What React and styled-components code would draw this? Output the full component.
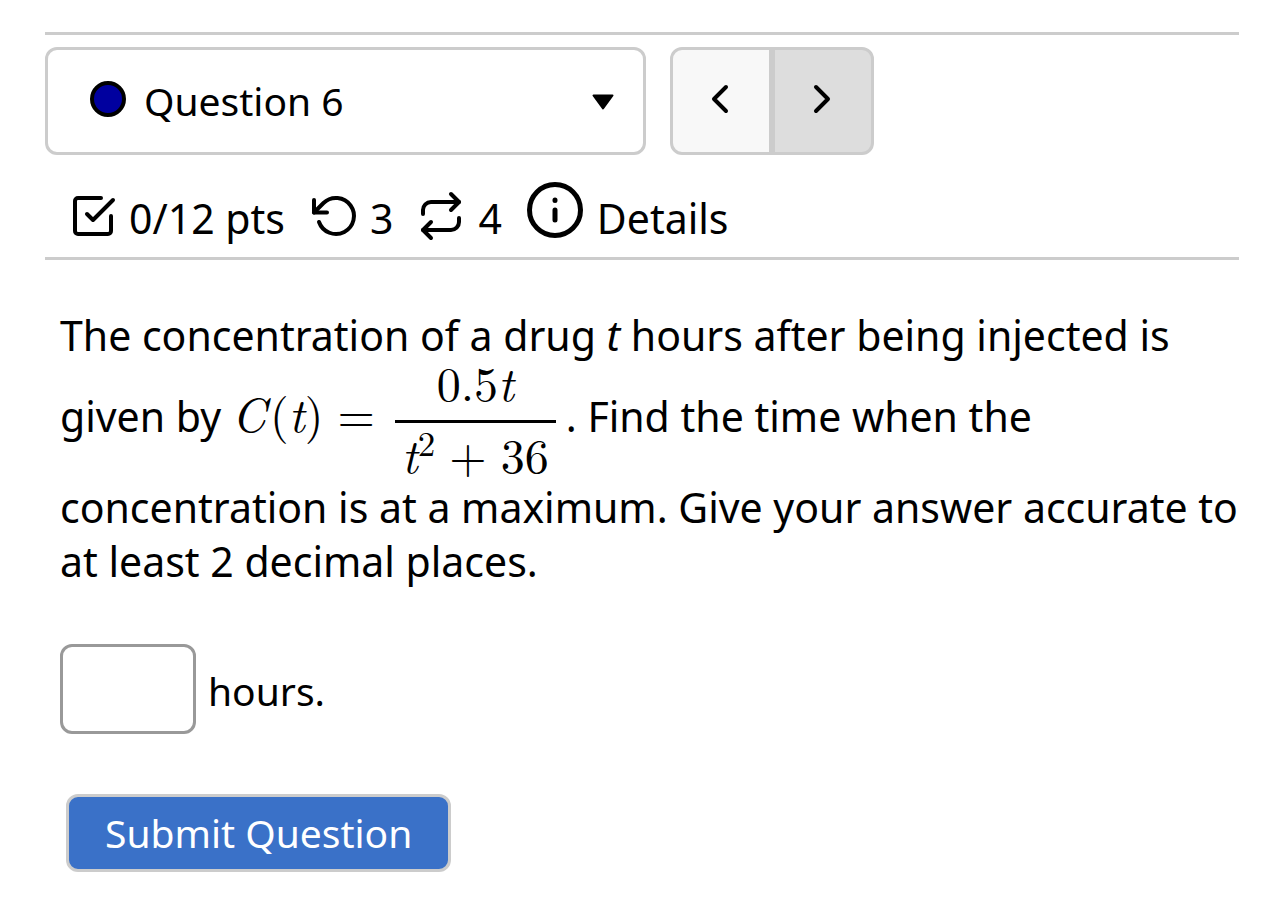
import React from "react";
import styled, { createGlobalStyle } from "styled-components";

const GlobalStyle = createGlobalStyle`
  *, *::before, *::after { box-sizing: border-box; }
  body {
    margin: 0;
    background: #fff;
    color: #000;
    font-family: "Trebuchet MS", "Noto Sans", sans-serif;
    font-size: 39px;
    line-height: 54px;
  }
  button, input, select { font: inherit; color: inherit; }
`;

const Page = styled.main`
  padding: 32px 45px;
`;

const Header = styled.header`
  border-top: 3px solid #ccc;
  border-bottom: 3px solid #ccc;
  padding-top: 12px;
`;

const Toolbar = styled.nav`
  display: flex;
  gap: 24px;
  height: 108px;
`;

const Picker = styled.label`
  position: relative;
  display: flex;
  flex: 0 1 601px;
`;

const PickerSelect = styled.select`
  appearance: none;
  width: 100%;
  padding: 0 80px 0 96px;
  border: 3px solid #ccc;
  border-radius: 12px;
  background: transparent;
`;

const StatusDot = styled.span`
  position: absolute;
  top: 34px;
  left: 45px;
  width: 36px;
  height: 36px;
  border: 4px solid #000;
  border-radius: 50%;
  background: #00009f;
  pointer-events: none;
`;

const Caret = styled.svg`
  position: absolute;
  top: 47px;
  right: 32px;
  pointer-events: none;
`;

const StepGroup = styled.div`
  display: flex;
`;

const StepButton = styled.button`
  display: grid;
  place-items: center;
  width: 102px;
  padding: 0 2px 4px 0;
  border: 3px solid #ccc;
  border-radius: ${(p) => (p.$end ? "0 12px 12px 0" : "12px 0 0 12px")};
  background: ${(p) => (p.$end ? "#ddd" : "#f8f8f8")};
`;

const Meta = styled.div`
  display: flex;
  align-items: center;
  gap: 25px;
  height: 102px;
  padding: 24px 24px 0;
  font-size: 41px;
`;

const MetaItem = styled.span`
  display: flex;
  align-items: center;
  gap: 12px;

  svg { margin-bottom: 4px; }
`;

const DetailsLink = styled.a`
  display: flex;
  align-items: center;
  gap: 14px;
  color: inherit;
  text-decoration: none;

  svg { margin-bottom: 16px; }
`;

const LineIcon = styled.svg`
  fill: none;
  stroke: #000;
  stroke-width: 4;
  stroke-linecap: round;
  stroke-linejoin: round;
  overflow: visible;
`;

const Body = styled.form`
  padding: 48px 0 0 15px;
`;

const Prompt = styled.p`
  margin: 0;
  font-size: 41px;
`;

const Formula = styled.span`
  font-family: "Latin Modern Roman", "Latin Modern Math", "Liberation Serif", serif;
  font-size: 48px;
  line-height: 54px;
  white-space: nowrap;
`;

const FunctionName = styled.i`
  margin-right: 4px;
`;

const Equals = styled.span`
  margin: 0 20px 0 14px;
`;

const Fraction = styled(Formula)`
  display: inline-flex;
  flex-direction: column;
  align-items: center;
  width: 161px;
  margin-right: 10px;
  vertical-align: middle;
`;

const Numerator = styled.span`
  height: 58px;
  line-height: 38px;
`;

const Denominator = styled.span`
  height: 60px;
  padding-top: 3px;
  width: 100%;
  border-top: 3px solid #000;
  text-align: center;
`;

const Exponent = styled.sup`
  font-size: 35px;
  line-height: 0;
`;

const Plus = styled.span`
  margin: 0 14px;
`;

const Answer = styled.label`
  display: flex;
  align-items: center;
  gap: 12px;
  margin-top: 56px;
`;

const AnswerInput = styled.input`
  width: 136px;
  height: 90px;
  padding: 0 12px;
  border: 3px solid #999;
  border-radius: 12px;
  background: #fff;
`;

const Unit = styled.span`
  padding-top: 4px;
`;

const Submit = styled.button`
  display: block;
  height: 78px;
  margin: 60px 0 0 6px;
  padding: 0 36px;
  border: 3px solid #ccc;
  border-radius: 12px;
  background: #3a71c8;
  color: #fff;
`;

export default function App() {
  return (
    <>
      <GlobalStyle />
      <Page>
        <Header>
          <Toolbar aria-label="Questions">
            <Picker>
              <PickerSelect aria-label="Question" defaultValue="6">
                <option value="6">Question 6</option>
              </PickerSelect>
              <StatusDot />
              <Caret width="22" height="16" viewBox="0 0 22 16" aria-hidden="true">
                <path
                  d="M1.500 1.500h19L11 14.500z"
                  stroke="#000"
                  strokeWidth="2"
                  strokeLinejoin="round"
                />
              </Caret>
            </Picker>
            <StepGroup>
              <StepButton type="button" aria-label="Previous question">
                <LineIcon width="16" height="28" viewBox="0 0 16 28">
                  <path d="M14 2 2 14l12 12" />
                </LineIcon>
              </StepButton>
              <StepButton type="button" aria-label="Next question" $end>
                <LineIcon width="16" height="28" viewBox="0 0 16 28">
                  <path d="m2 2 12 12L2 26" />
                </LineIcon>
              </StepButton>
            </StepGroup>
          </Toolbar>
          <Meta>
            <MetaItem>
              <LineIcon width="48" height="48" viewBox="0 0 48 48">
                <path d="M32 6H9a3 3 0 0 0-3 3v30a3 3 0 0 0 3 3h30a3 3 0 0 0 3-3V24" />
                <path d="m18 22 6 6L44 8" />
              </LineIcon>
              0/12 pts
            </MetaItem>
            <MetaItem>
              <LineIcon width="48" height="48" viewBox="0 0 48 48">
                <path d="M4 8v12.500h13" />
                <path d="M4 20.500 13.500 11A18 18 0 1 1 9 30" />
              </LineIcon>
              3
            </MetaItem>
            <MetaItem>
              <LineIcon width="48" height="48" viewBox="0 0 48 48">
                <path d="M33 2l8 8-8 8" />
                <path d="M5 22v-4a8 8 0 0 1 8-8h28" />
                <path d="M13 46 5 38l8-8" />
                <path d="M41 26v4a8 8 0 0 1-8 8H5" />
              </LineIcon>
              4
            </MetaItem>
            <DetailsLink href="#details">
              <LineIcon width="56" height="56" viewBox="0 0 56 56">
                <circle cx="28" cy="28" r="25.500" strokeWidth="5" />
                <path d="M28 18v.500M28 28v10" strokeWidth="5" />
              </LineIcon>
              Details
            </DetailsLink>
          </Meta>
        </Header>
        <Body onSubmit={(e) => e.preventDefault()}>
          <Prompt>
            The concentration of a drug <i>t</i> hours after being injected is given by{" "}
            <Formula>
              <FunctionName>C</FunctionName>(<i>t</i>)<Equals>=</Equals>
            </Formula>
            <Fraction>
              <Numerator>
                0.5<i>t</i>
              </Numerator>
              <Denominator>
                <i>t</i>
                <Exponent>2</Exponent>
                <Plus>+</Plus>36
              </Denominator>
            </Fraction>
            . Find the time when the concentration is at a maximum. Give your answer accurate to
            at least 2 decimal places.
          </Prompt>
          <Answer>
            <AnswerInput type="text" />
            <Unit>hours.</Unit>
          </Answer>
          <Submit type="submit">Submit Question</Submit>
        </Body>
      </Page>
    </>
  );
}
